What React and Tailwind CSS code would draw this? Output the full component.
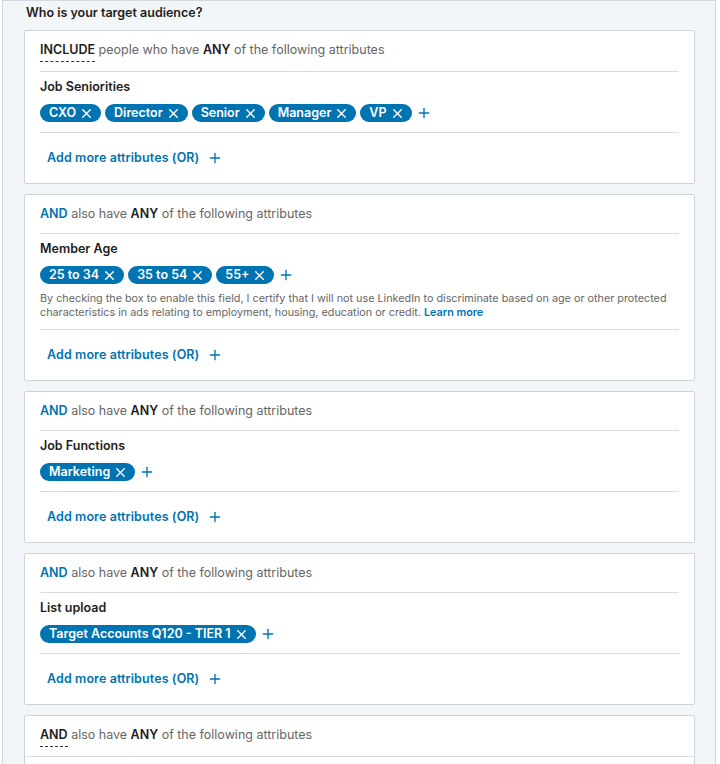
import { X, Plus } from 'lucide-react';

const FONT = { fontFamily: 'Inter, "Liberation Sans", sans-serif' };

const CARDS = [
  {
    lead: 'INCLUDE',
    leadStyle: 'dark',
    intro: ' people who have ',
    label: 'Job Seniorities',
    pills: ['CXO', 'Director', 'Senior', 'Manager', 'VP'],
  },
  {
    lead: 'AND',
    leadStyle: 'blue',
    intro: ' also have ',
    label: 'Member Age',
    pills: ['25 to 34', '35 to 54', '55+'],
    disclaimer: true,
  },
  {
    lead: 'AND',
    leadStyle: 'blue',
    intro: ' also have ',
    label: 'Job Functions',
    pills: ['Marketing'],
  },
  {
    lead: 'AND',
    leadStyle: 'blue',
    intro: ' also have ',
    label: 'List upload',
    pills: ['Target Accounts Q120 - TIER 1'],
  },
];

function Pill({ text }) {
  return (
    <span className="inline-flex items-center h-[18px] pl-[9px] pr-[7px] rounded-full bg-[#0073b1] text-white text-[12.5px] font-semibold leading-none">
      {text}
      <X size={15} strokeWidth={2.25} className="ml-[3px]" />
    </span>
  );
}

function Header({ lead, leadStyle, intro, full }) {
  return (
    <>
      <div className="pl-[15px] pr-4 pt-[9px] pb-[9px] text-[12.5px] leading-5 text-[#666666]">
        {leadStyle === 'dark' ? (
          <span className="inline-block leading-5 pb-[1px] font-semibold text-[#1d1d1d] border-b border-dashed border-[#333]">
            {lead}
          </span>
        ) : (
          <span className="font-semibold text-[#0073b1]">{lead}</span>
        )}
        {intro}
        <span className="font-semibold text-[#1d1d1d]">ANY</span> of the following attributes
      </div>
      <div className={`h-px bg-[#dcdcdc] ${full ? '' : 'mx-[15px]'}`} />
    </>
  );
}

function AddMore() {
  return (
    <div className="h-[50px] flex items-center pl-[22px] text-[12.5px] tracking-[0.1px] font-semibold text-[#0073b1]">
      Add more attributes (OR)
      <Plus size={16} strokeWidth={2} className="ml-[8px]" />
    </div>
  );
}

function Card({ card }) {
  return (
    <div className="bg-white border border-[#cfd3d7] rounded-[2px]">
      <Header lead={card.lead} leadStyle={card.leadStyle} intro={card.intro} />
      <div className={`pl-[15px] pr-[14px] pt-[5px] ${card.disclaimer ? 'pb-[9px]' : 'pb-[10px]'}`}>
        <div className="text-[12.5px] leading-5 font-semibold text-[#1d1d1d]">{card.label}</div>
        <div className="mt-[7px] flex flex-wrap items-center gap-[4px]">
          {card.pills.map((p) => (
            <Pill key={p} text={p} />
          ))}
          <Plus size={16} strokeWidth={2} className="text-[#0073b1]" />
        </div>
        {card.disclaimer && (
          <p className="mt-[8px] text-[10.8px] leading-[14px] text-[#666666]">
            By checking the box to enable this field, I certify that I will not use LinkedIn to discriminate based on age or other protected characteristics in ads relating to employment, housing, education or credit.{' '}
            <span className="font-semibold text-[#0073b1]">Learn more</span>
          </p>
        )}
      </div>
      <div className="h-px bg-[#dcdcdc] mx-[15px]" />
      <AddMore />
    </div>
  );
}

export default function App() {
  return (
    <div style={FONT} className="w-[720px] h-[764px] overflow-hidden bg-white">
      <div className="ml-[2px] w-[714px] h-full bg-[#f3f6f8] border-l border-r border-t border-[#d3d7db] pl-[21px] pr-[20px]">
        <h2 className="pt-[2px] pl-[2px] h-[29px] text-[12.5px] leading-5 font-semibold text-[#1d1d1d]">
          Who is your target audience?
        </h2>
        <div className="flex flex-col gap-[10px]">
          {CARDS.map((c, i) => (
            <Card key={i} card={c} />
          ))}
          <div className="bg-white border border-[#cfd3d7] rounded-[2px] h-[200px]">
            <Header lead="AND" leadStyle="dark" intro=" also have " full />
          </div>
        </div>
      </div>
    </div>
  );
}
